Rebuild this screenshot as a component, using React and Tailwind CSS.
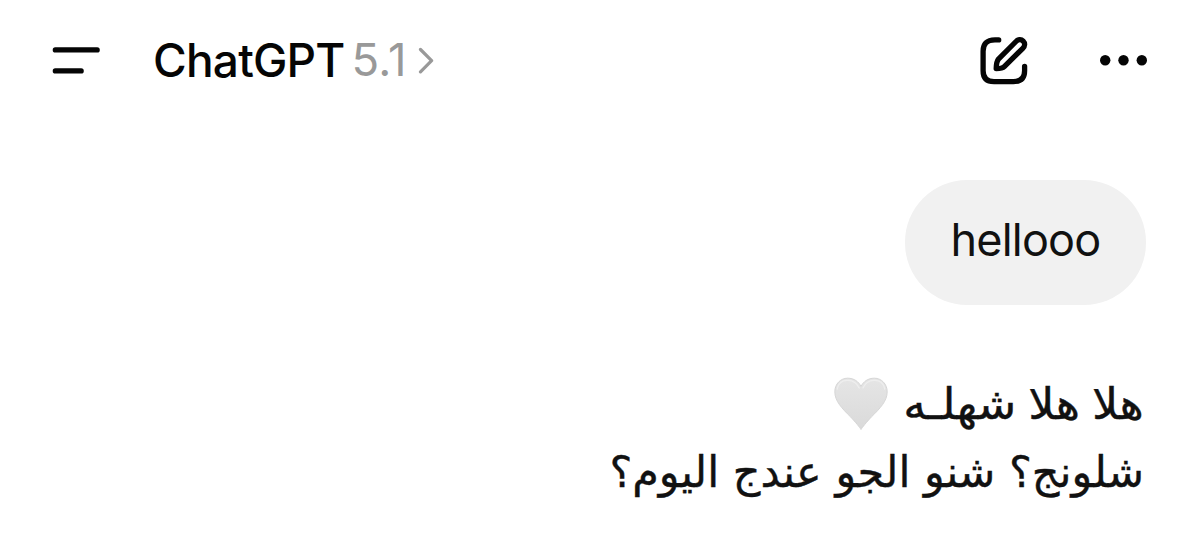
import React from 'react';

const MESSAGES = [
  { id: 1, role: 'user', text: 'hellooo' },
  { id: 2, role: 'assistant', lines: ['هلا هلا شهلـه', 'شلونج؟ شنو الجو عندج اليوم؟'] },
];

function MenuIcon() {
  return (
    <svg width="48" height="28" viewBox="0 0 48 28" fill="none" stroke="#050505" strokeWidth="5.2" strokeLinecap="round">
      <path d="M3.3 3.9H45.2M3.3 24.9H29.2" />
    </svg>
  );
}

function ComposeIcon() {
  return (
    <svg width="50" height="50" viewBox="0 0 50 50" fill="none" stroke="#050505" strokeWidth="5.3" strokeLinecap="round" strokeLinejoin="round">
      <path d="M18.7 4.9H15C6.5 4.9 3.1 9.2 3.1 16.2V35.7C3.1 42.7 6.5 46.6 14 46.6H33.3C40.8 46.6 44.6 42.7 44.6 35.7V31.3" />
      <path d="M36 6.5C38.3 4.2 41.3 4.2 43.2 6.1C45.2 8.1 45.1 11 42.8 13.3L24.3 31.6C22.9 33 21.3 33.6 16.2 33.6C16.3 28.9 17 25.8 18.7 23.8Z" />
    </svg>
  );
}

function MoreIcon() {
  return (
    <svg width="48" height="12" viewBox="0 0 48 12" fill="#050505">
      <circle cx="5.2" cy="6.3" r="5.2" />
      <circle cx="23.5" cy="6.3" r="5.2" />
      <circle cx="41.8" cy="6.3" r="5.2" />
    </svg>
  );
}

function WhiteHeart() {
  return (
    <svg width="54" height="54" viewBox="0 0 54 54">
      <defs>
        <linearGradient id="heart" x1="0" y1="0" x2="0" y2="1">
          <stop offset="0" stopColor="#e5e5e5" />
          <stop offset="1" stopColor="#dadada" />
        </linearGradient>
      </defs>
      <path
        d="M27 52.5C25.5 50 22 45.8 16.5 39.8C8 31.5 .8 24 .8 14.8C.8 7 6.5 1.2 13.7 1.2C19.8 1.2 24.7 4.5 27 9.5C29.3 4.5 34.2 1.2 40.3 1.2C47.5 1.2 53.2 7 53.2 14.8C53.2 24 46 31.5 37.5 39.8C32 45.8 28.5 50 27 52.5Z"
        fill="url(#heart)"
        stroke="#d6d6d6"
        strokeWidth="1"
      />
      <path d="M3.2 12C4.5 6 9 3.2 14 3.4C19 3.6 23 6.3 25.2 11M29 11C31 6.3 35 3.6 40 3.4C45 3.2 49.5 6 50.8 12" fill="none" stroke="#eeeeee" strokeWidth="1.3" strokeLinecap="round" />
    </svg>
  );
}

function Header() {
  return (
    <header className="flex h-[120px] items-center justify-between pl-[52px] pr-[52px]">
      <div className="flex items-center">
        <MenuIcon />
        <h1 className="ml-[53px] text-[46px] leading-none font-medium tracking-[-0.8px] text-[#050505] whitespace-nowrap">ChatGPT</h1>
        <span className="ml-[7px] text-[45.5px] leading-none font-normal tracking-[0.4px] text-[#999999]">5.1</span>
        <svg className="ml-[11px]" width="18" height="28" viewBox="0 0 18 28" fill="none" stroke="#999999" strokeWidth="3.2" strokeLinecap="round" strokeLinejoin="round">
          <path d="M2.5 3.5L13.6 14.7L2.5 25.9" />
        </svg>
      </div>
      <div className="flex items-center gap-[70px]">
        <ComposeIcon />
        <MoreIcon />
      </div>
    </header>
  );
}

export default function App() {
  const [question, answer] = MESSAGES;

  return (
    <div className="h-[551px] w-[1200px] overflow-hidden bg-white font-['Inter','Liberation_Sans',sans-serif]">
      <Header />
      <main className="flex flex-col items-end pt-[60px] pr-[54px]">
        {/* User bubble */}
        <div className="flex h-[125px] w-[241px] items-center justify-center rounded-[62px] bg-[#f1f1f1] pb-1.5">
          <p className="text-[45px] leading-none tracking-[-0.8px] text-[#111111]">{question.text}</p>
        </div>

        {/* Assistant reply */}
        <div dir="rtl" className="mt-[65px] pr-0.5 font-['DejaVu_Sans',sans-serif] text-[43px] text-[#111111] [-webkit-text-stroke:0.4px_#111111]">
          <p className="flex h-[68px] items-center whitespace-nowrap">
            <span className="origin-right scale-x-[1.07] [word-spacing:-2.5px]">{answer.lines[0]}</span>
            <span className="mr-[31px]"><WhiteHeart /></span>
          </p>
          <p className="flex h-[68px] items-center whitespace-nowrap">
            <span>{answer.lines[1]}</span>
          </p>
        </div>
      </main>
    </div>
  );
}
